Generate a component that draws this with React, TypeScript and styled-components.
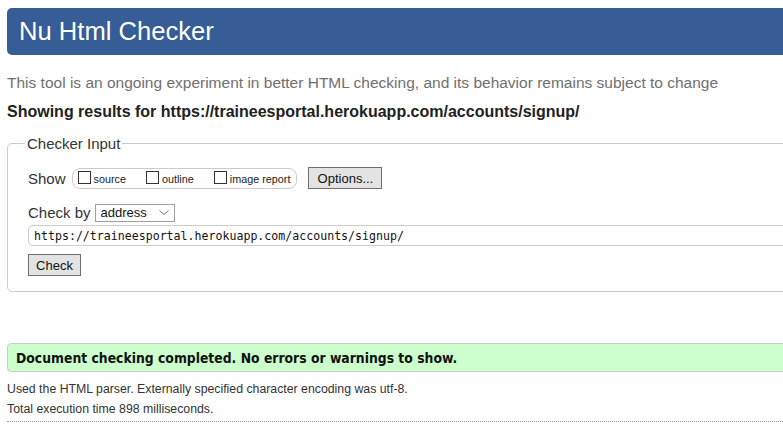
import styled, { createGlobalStyle } from "styled-components"

const GlobalStyle = createGlobalStyle`
    html, body {
        margin: 0;
        padding: 0;
        background: #fff;
        overflow: hidden;
    }
    body {
        font-family: "Liberation Sans", Arial, sans-serif;
        color: #222;
    }
`

const Page = styled.div`
    width: 840px;
    padding: 8px 0 0 7px;
`

const Header = styled.h1`
    margin: 0;
    height: 47px;
    line-height: 47px;
    padding-left: 12px;
    background: #365d95;
    color: #fff;
    font-weight: normal;
    font-size: 25.6px;
    border-radius: 5px 0 0 5px;
`

const Intro = styled.p`
    margin: 19px 0 0 0;
    font-size: 15.5px;
    line-height: 17px;
    color: #6f6f6f;
`

const ResultsFor = styled.h2`
    margin: 12px 0 0 0;
    font-size: 16px;
    line-height: 17px;
    font-weight: bold;
    color: #222;
`

const Fieldset = styled.fieldset`
    margin: 15px 0 0 0;
    padding: 15px 20px 15px 20px;
    border: 1px solid #ccc;
    border-radius: 5px 0 0 5px;
    min-width: 0;
`

const Legend = styled.legend`
    padding: 0 2px;
    margin-left: -3px;
    font-size: 15px;
    line-height: 17px;
    color: #333;
`

const Row = styled.div`
    display: flex;
    align-items: center;
    gap: 6px;
`

const RowLabel = styled.span`
    font-size: 15px;
    line-height: 17px;
    color: #333;
`

const OptionGroup = styled.div`
    display: flex;
    align-items: flex-end;
    padding: 0 6px 4px 5px;
    box-sizing: border-box;
    height: 21px;
    border: 1px solid #ccc;
    border-radius: 8px;
`

const OptionItem = styled.label<{last?: boolean}>`
    display: flex;
    align-items: flex-end;
    gap: 3px;
    margin-right: ${props => props.last ? 0 : 20}px;
    font-size: 10.8px;
    line-height: 11px;
    color: #222;
`

const CheckBox = styled.input`
    appearance: none;
    margin: 0;
    width: 13px;
    height: 13px;
    border: 1px solid #333;
    background: #fff;
    box-sizing: border-box;
`

const OptionText = styled.span`
    margin-bottom: -1px;
`

const Button = styled.button<{w: number}>`
    width: ${props => props.w}px;
    height: 22px;
    margin: 0;
    padding: 0;
    border: 1px solid #707070;
    background: #e3e3e3;
    font-family: "Liberation Sans", Arial, sans-serif;
    font-size: 13px;
    color: #111;
`

const OptionsButton = styled(Button)`
    margin-left: 5px;
`

const CheckByRow = styled(Row)`
    margin-top: 14px;
    gap: 4px;
`

const SelectWrap = styled.div`
    position: relative;
    width: 80px;
    height: 18px;
`

const Select = styled.select`
    appearance: none;
    width: 100%;
    height: 100%;
    margin: 0;
    padding: 0 0 0 5px;
    border: 1px solid #a0a0a0;
    border-radius: 0;
    background: #fff;
    font-family: "Liberation Sans", Arial, sans-serif;
    font-size: 13px;
    color: #111;
`

const Chevron = styled.svg`
    position: absolute;
    right: 6px;
    top: 7px;
    pointer-events: none;
`

const UrlInput = styled.input`
    display: block;
    width: 100%;
    height: 21px;
    margin: 4px 0 0 0;
    padding: 0 5px;
    box-sizing: border-box;
    border: 1px solid #ccc;
    border-radius: 5px 0 0 5px;
    font-family: "DejaVu Sans Mono", "Liberation Mono", monospace;
    font-size: 11.6px;
    color: #111;
`

const CheckRow = styled.div`
    margin-top: 8px;
`

const Success = styled.div`
    margin-top: 51px;
    height: 29px;
    box-sizing: border-box;
    display: flex;
    align-items: center;
    padding-left: 8px;
    background: #ccffcc;
    border: 1px solid #ccc;
    border-radius: 4px 0 0 4px;
    font-family: "DejaVu Sans", Verdana, sans-serif;
    font-stretch: condensed;
    font-weight: bold;
    font-size: 13.8px;
    color: #111;
`

const Details = styled.div`
    padding: 7px 0 2px 0;
    border-bottom: 1px dotted #999;
    font-size: 12.3px;
    line-height: 20px;
    color: #333;
`

const DetailLine = styled.p`
    margin: 0;
`

export default function App() {
    return (
        <Page>
            <GlobalStyle />
            <Header>Nu Html Checker</Header>
            <Intro>This tool is an ongoing experiment in better HTML checking, and its behavior remains subject to change</Intro>
            <ResultsFor>Showing results for https://traineesportal.herokuapp.com/accounts/signup/</ResultsFor>
            <Fieldset>
                <Legend>Checker Input</Legend>
                <Row>
                    <RowLabel>Show</RowLabel>
                    <OptionGroup>
                        <OptionItem><CheckBox type="checkbox" /><OptionText>source</OptionText></OptionItem>
                        <OptionItem><CheckBox type="checkbox" /><OptionText>outline</OptionText></OptionItem>
                        <OptionItem last><CheckBox type="checkbox" /><OptionText>image report</OptionText></OptionItem>
                    </OptionGroup>
                    <OptionsButton w={74}>Options...</OptionsButton>
                </Row>
                <CheckByRow>
                    <RowLabel>Check by</RowLabel>
                    <SelectWrap>
                        <Select defaultValue="address">
                            <option value="address">address</option>
                            <option value="file">file upload</option>
                            <option value="text">text input</option>
                        </Select>
                        <Chevron width="10" height="5" viewBox="0 0 10 5">
                            <path d="M0.5 0.5 L5 4.5 L9.5 0.5" fill="none" stroke="#777" strokeWidth="1" />
                        </Chevron>
                    </SelectWrap>
                </CheckByRow>
                <UrlInput defaultValue="https://traineesportal.herokuapp.com/accounts/signup/" />
                <CheckRow>
                    <Button w={53}>Check</Button>
                </CheckRow>
            </Fieldset>
            <Success>Document checking completed. No errors or warnings to show.</Success>
            <Details>
                <DetailLine>Used the HTML parser. Externally specified character encoding was utf-8.</DetailLine>
                <DetailLine>Total execution time 898 milliseconds.</DetailLine>
            </Details>
        </Page>
    )
}
